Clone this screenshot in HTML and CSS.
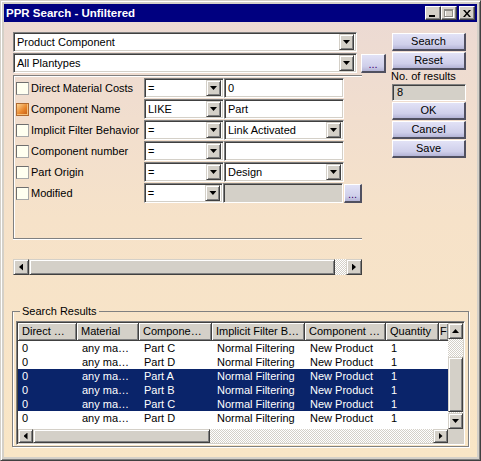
FILE: index.html
```html
<!DOCTYPE html>
<html lang="en">
<head>
<meta charset="UTF-8">
<title>PPR Search - Unfiltered</title>
<link rel="stylesheet" href="styles.css">
</head>
<body>
<div class="window">
  <div class="titlebar">
    <span class="title">PPR Search - Unfiltered</span>
    <div class="caption_btns">
      <span class="cap_btn">
        <svg width="8" height="7" viewBox="0 0 8 7"><rect x="0" y="5" width="6" height="2" fill="#000"/></svg>
      </span>
      <span class="cap_btn">
        <svg width="10" height="9" viewBox="0 0 10 9"><rect x="1.5" y="1.5" width="8" height="7" fill="none" stroke="#fff"/><rect x="0.5" y="0.5" width="8" height="7" fill="none" stroke="#8c8a84"/><rect x="0" y="1" width="9" height="1" fill="#8c8a84"/></svg>
      </span>
      <span class="cap_btn cap_close">
        <svg width="8" height="7" viewBox="0 0 8 7"><path d="M0 0h2l2 2.5 2-2.5h2l-3 3.5 3 3.5h-2l-2-2.5-2 2.5h-2l3-3.5z" fill="#000"/></svg>
      </span>
    </div>
  </div>

  <div class="client">
    <div class="main">
      <div class="left">
        <div class="combo wide">
          <span class="combo_text">Product Component</span>
          <span class="drop"><i class="arrow_down"></i></span>
        </div>
        <div class="line">
          <div class="combo wide">
            <span class="combo_text">All Plantypes</span>
            <span class="drop"><i class="arrow_down"></i></span>
          </div>
          <span class="dots_btn">...</span>
        </div>

        <div class="filters">
          <div class="frow">
            <span class="check"></span>
            <span class="flabel">Direct Material Costs</span>
            <div class="combo op"><span class="combo_text">=</span><span class="drop"><i class="arrow_down"></i></span></div>
            <div class="field">0</div>
          </div>
          <div class="frow">
            <span class="check checked"></span>
            <span class="flabel">Component Name</span>
            <div class="combo op"><span class="combo_text">LIKE</span><span class="drop"><i class="arrow_down"></i></span></div>
            <div class="field">Part</div>
          </div>
          <div class="frow">
            <span class="check"></span>
            <span class="flabel">Implicit Filter Behavior</span>
            <div class="combo op"><span class="combo_text">=</span><span class="drop"><i class="arrow_down"></i></span></div>
            <div class="combo value"><span class="combo_text">Link Activated</span><span class="drop"><i class="arrow_down"></i></span></div>
          </div>
          <div class="frow">
            <span class="check"></span>
            <span class="flabel">Component number</span>
            <div class="combo op"><span class="combo_text">=</span><span class="drop"><i class="arrow_down"></i></span></div>
            <div class="field"></div>
          </div>
          <div class="frow">
            <span class="check"></span>
            <span class="flabel">Part Origin</span>
            <div class="combo op"><span class="combo_text">=</span><span class="drop"><i class="arrow_down"></i></span></div>
            <div class="combo value"><span class="combo_text">Design</span><span class="drop"><i class="arrow_down"></i></span></div>
          </div>
          <div class="frow">
            <span class="check"></span>
            <span class="flabel">Modified</span>
            <div class="combo op"><span class="combo_text">=</span><span class="drop"><i class="arrow_down"></i></span></div>
            <div class="field disabled"></div>
            <span class="dots_btn small">...</span>
          </div>
        </div>

        <div class="hscroll">
          <span class="sb_btn"><i class="arrow_left"></i></span>
          <span class="sb_thumb" style="width: 306px"></span>
          <span class="sb_track"></span>
          <span class="sb_btn"><i class="arrow_right"></i></span>
        </div>
      </div>

      <div class="right">
        <div class="btn">Search</div>
        <div class="btn">Reset</div>
        <div class="count_label">No. of results</div>
        <div class="count_box">8</div>
        <div class="btn">OK</div>
        <div class="btn">Cancel</div>
        <div class="btn">Save</div>
      </div>
    </div>

    <fieldset class="results">
      <legend>Search Results</legend>
      <div class="table">
        <div class="list">
          <div class="thead">
            <span class="th c1">Direct …</span>
            <span class="th c2">Material</span>
            <span class="th c3">Compone…</span>
            <span class="th c4">Implicit Filter B…</span>
            <span class="th c5">Component …</span>
            <span class="th c6">Quantity</span>
            <span class="th c7">F</span>
          </div>
          <div class="tr">
            <span class="td c1">0</span><span class="td c2">any ma…</span><span class="td c3">Part C</span><span class="td c4">Normal Filtering</span><span class="td c5">New Product</span><span class="td c6">1</span>
          </div>
          <div class="tr">
            <span class="td c1">0</span><span class="td c2">any ma…</span><span class="td c3">Part D</span><span class="td c4">Normal Filtering</span><span class="td c5">New Product</span><span class="td c6">1</span>
          </div>
          <div class="tr sel">
            <span class="td c1">0</span><span class="td c2">any ma…</span><span class="td c3">Part A</span><span class="td c4">Normal Filtering</span><span class="td c5">New Product</span><span class="td c6">1</span>
          </div>
          <div class="tr sel">
            <span class="td c1">0</span><span class="td c2">any ma…</span><span class="td c3">Part B</span><span class="td c4">Normal Filtering</span><span class="td c5">New Product</span><span class="td c6">1</span>
          </div>
          <div class="tr sel">
            <span class="td c1">0</span><span class="td c2">any ma…</span><span class="td c3">Part C</span><span class="td c4">Normal Filtering</span><span class="td c5">New Product</span><span class="td c6">1</span>
          </div>
          <div class="tr">
            <span class="td c1">0</span><span class="td c2">any ma…</span><span class="td c3">Part D</span><span class="td c4">Normal Filtering</span><span class="td c5">New Product</span><span class="td c6">1</span>
          </div>
        </div>
        <div class="vscroll">
          <span class="sb_btn tall"><i class="arrow_up"></i></span>
          <span class="sb_track fixed"></span>
          <span class="sb_thumb" style="height: 55px"></span>
          <span class="sb_track"></span>
          <span class="sb_btn tall"><i class="arrow_down"></i></span>
        </div>
        <div class="hscroll inner">
          <span class="sb_btn"><i class="arrow_left"></i></span>
          <span class="sb_thumb" style="width: 177px"></span>
          <span class="sb_track"></span>
          <span class="sb_btn"><i class="arrow_right"></i></span>
        </div>
        <div class="corner"></div>
      </div>
    </fieldset>
  </div>
</div>
</body>
</html>
```

FILE: styles.css
```css
body, html {
  margin: 0;
}
body {
  font-family: "Liberation Sans", Arial, sans-serif;
  font-size: 11px;
  color: #000;
  background: #fff;
}

/* window frame */
.window {
  width: 481px;
  height: 461px;
  box-sizing: border-box;
  border: 1px solid;
  border-color: #d4d0c8 #404040 #404040 #d4d0c8;
  box-shadow: inset 1px 1px #fff, inset -1px -1px #808080;
  padding: 3px;
  background: #d4d0c8;
  display: flex;
  flex-direction: column;
}
.titlebar {
  height: 18px;
  flex-shrink: 0;
  background: #000080;
  display: flex;
  align-items: center;
  justify-content: space-between;
  padding: 0 2px;
}
.title {
  color: #fff;
  font-weight: bold;
  font-size: 11.5px;
}
.caption_btns {
  display: flex;
}
.cap_btn {
  width: 16px;
  height: 14px;
  box-sizing: border-box;
  display: flex;
  align-items: center;
  justify-content: center;
  background: #d4d0c8;
  border: 1px solid;
  border-color: #fff #404040 #404040 #fff;
  box-shadow: inset -1px -1px #808080;
}
.cap_close {
  margin-left: 2px;
}

/* client area */
.client {
  flex: 1;
  background: linear-gradient(#ecdad3, #f6e2c9 45%, #f9e6c6);
  padding: 10px 8px 0 9px;
}
.main {
  display: flex;
  gap: 6px;
}
.left {
  width: 373px;
}
.line {
  display: flex;
  align-items: center;
  margin-top: 1px;
}

/* sunken controls */
.combo, .field, .count_box {
  box-sizing: border-box;
  border: 1px solid;
  border-color: #808080 #fff #fff #808080;
  box-shadow: inset 1px 1px #404040, inset -1px -1px #d4d0c8;
  background: #fff;
}
.combo {
  display: flex;
  align-items: center;
  height: 20px;
  padding: 2px;
}
.combo.wide {
  width: 344px;
}
.combo.op {
  width: 80px;
}
.combo.value {
  width: 120px;
}
.combo_text {
  flex: 1;
  padding-left: 1px;
  white-space: nowrap;
  overflow: hidden;
}
.drop, .sb_btn {
  box-sizing: border-box;
  display: flex;
  align-items: center;
  justify-content: center;
  background: #d4d0c8;
  border: 1px solid;
  border-color: #d4d0c8 #404040 #404040 #d4d0c8;
  box-shadow: inset 1px 1px #fff, inset -1px -1px #808080;
}
.drop {
  width: 15px;
  height: 16px;
}
.field {
  width: 120px;
  height: 20px;
  line-height: 18px;
  padding-left: 3px;
}
.field.disabled {
  background: #d4d0c8;
}

/* arrows */
.arrow_down, .arrow_up, .arrow_left, .arrow_right {
  display: block;
  background: #000;
}
.arrow_down {
  width: 7px;
  height: 4px;
  clip-path: polygon(0 0, 100% 0, 50% 100%);
}
.arrow_up {
  width: 7px;
  height: 4px;
  clip-path: polygon(50% 0, 100% 100%, 0 100%);
}
.arrow_left {
  width: 4px;
  height: 7px;
  clip-path: polygon(0 50%, 100% 0, 100% 100%);
}
.arrow_right {
  width: 4px;
  height: 7px;
  clip-path: polygon(0 0, 100% 50%, 0 100%);
}

/* lavender buttons */
.dots_btn, .btn {
  box-sizing: border-box;
  background: linear-gradient(#e2e2f6, #cfcfea 70%, #b4b4d6);
  border-top: 1px solid #fff;
  border-left: 1px solid #fff;
  border-right: 2px solid #505060;
  border-bottom: 2px solid #505060;
  text-align: center;
}
.dots_btn {
  width: 25px;
  height: 19px;
  margin-left: 4px;
  line-height: 18px;
  color: #400070;
}
.dots_btn.small {
  width: 18px;
  height: 19px;
  margin-left: 1px;
}
.btn {
  height: 18px;
  line-height: 15px;
  margin-bottom: 1px;
}

.right {
  width: 74px;
  margin-top: 1px;
  display: flex;
  flex-direction: column;
}
.count_label {
  height: 13px;
  line-height: 13px;
  margin-left: -1px;
  margin-top: -1px;
}
.count_box {
  height: 17px;
  line-height: 15px;
  padding-left: 4px;
  margin-top: 1px;
  margin-bottom: 1px;
  background: #d4d0c8;
}

/* filter panel */
.filters {
  width: 349px;
  height: 164px;
  box-sizing: border-box;
  margin-top: 2px;
  border: 1px solid #808080;
  border-right: none;
  box-shadow: inset 1px 1px #fff, 0 1px #fff;
  padding: 2px 0 0 2px;
}
.frow {
  display: flex;
  align-items: center;
  height: 20px;
  margin-bottom: 1px;
}
.check {
  width: 13px;
  height: 13px;
  box-sizing: border-box;
  border: 1px solid;
  border-color: #6e6e6e #a8a8a8 #a8a8a8 #6e6e6e;
  background: #fffff0;
  margin-right: 2px;
}
.check.checked {
  border-color: #b06a30;
  background: linear-gradient(135deg, #fcd595, #e8862c 55%, #c25a12);
  box-shadow: inset -1px -1px #f5c07a;
}
.flabel {
  width: 113px;
  white-space: nowrap;
}

/* scrollbars */
.hscroll {
  display: flex;
  width: 349px;
  height: 16px;
  margin-top: 20px;
}
.hscroll .sb_btn {
  width: 16px;
  height: 16px;
}
.sb_thumb {
  box-sizing: border-box;
  background: #d4d0c8;
  border: 1px solid;
  border-color: #d4d0c8 #404040 #404040 #d4d0c8;
  box-shadow: inset 1px 1px #fff, inset -1px -1px #808080;
}
.sb_track {
  flex: 1;
  background: repeating-conic-gradient(#d4d0c8 0 25%, #fff 0 50%) 0 0 / 2px 2px;
}
.sb_track.fixed {
  flex: none;
  height: 18px;
}

/* results group */
.results {
  width: 457px;
  box-sizing: border-box;
  margin: 30px 0 0 -1px;
  padding: 0 3px 1px 3px;
  border: 1px solid #808080;
  box-shadow: inset 1px 0 #fff, 1px 1px #fff;
  min-width: 0;
}
.results legend {
  margin-left: 4px;
  padding: 0 2px;
  line-height: 13px;
}
.table {
  width: 449px;
  height: 124px;
  box-sizing: border-box;
  margin-top: 3px;
  border: 1px solid;
  border-color: #808080 #fff #fff #808080;
  box-shadow: inset 1px 1px #404040, inset -1px -1px #d4d0c8;
  padding: 1px;
  display: grid;
  grid-template-columns: 1fr 15px;
  grid-template-rows: 1fr 14px;
}
.list {
  background: #fff;
  overflow: hidden;
}
.thead {
  display: flex;
  height: 18px;
}
.th {
  box-sizing: border-box;
  flex-shrink: 0;
  background: #d4d0c8;
  border-right: 1px solid #404040;
  border-bottom: 1px solid #404040;
  box-shadow: inset 1px 1px #fff, inset -1px -1px #808080;
  padding-left: 4px;
  line-height: 16px;
  white-space: nowrap;
  overflow: hidden;
}
.tr {
  display: flex;
  height: 14px;
  line-height: 14px;
}
.tr.sel {
  background: #0a246a;
  color: #fff;
}
.td {
  box-sizing: border-box;
  flex-shrink: 0;
  padding-left: 5px;
  white-space: nowrap;
}
.td.c1 {
  padding-left: 4px;
}
.c1 { width: 59px; }
.c2 { width: 62px; }
.c3 { width: 73px; }
.c4 { width: 93px; }
.c5 { width: 81px; }
.c6 { width: 53px; }
.th.c7 {
  width: auto;
  flex: 1;
  padding-left: 1px;
  border-right: none;
}
.vscroll {
  display: flex;
  flex-direction: column;
}
.vscroll .sb_btn {
  width: 15px;
  height: 16px;
}
.hscroll.inner {
  width: auto;
  height: 14px;
  margin-top: 0;
}
.hscroll.inner .sb_btn {
  width: 15px;
  height: 14px;
}
.corner {
  background: #d4d0c8;
}
```
